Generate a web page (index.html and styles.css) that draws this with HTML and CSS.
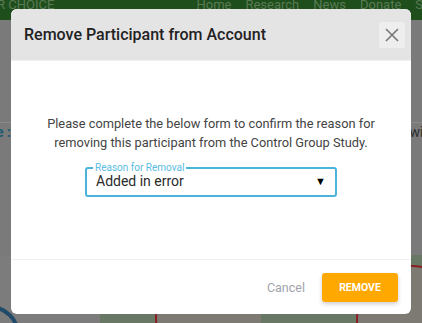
FILE: index.html
```html
<!DOCTYPE html>
<html lang="en">
<head>
  <meta charset="UTF-8" />
  <meta name="viewport" content="width=device-width, initial-scale=1.0"/>
  <title>Remove Participant</title>
  <link rel="stylesheet" href="styles.css">
</head>
<body>
  <div class="page">
    <header class="topnav">
      <span class="brand">R CHOICE</span>
      <nav class="links">
        <a>Home</a><a>Research</a><a>News</a><a>Donate</a><a>S</a>
      </nav>
    </header>
    <div class="content">
      <div class="row-line"></div>
      <div class="row-text">
        <span class="teal">e :</span>
        <span>wit</span>
      </div>
      <div class="cards">
        <div class="card card-grey"><span class="ring ring-blue"></span></div>
        <div class="card card-green"><span class="ring ring-red"></span></div>
        <div class="card card-green"><span class="ring ring-red small"></span></div>
      </div>
    </div>
  </div>

  <div class="overlay">
    <div class="modal">
      <div class="modal-header">
        <h2>Remove Participant from Account</h2>
        <button class="close" aria-label="Close">
          <svg width="14" height="14" viewBox="0 0 14 14">
            <path d="M1 1 L13 13 M13 1 L1 13" stroke="#777" stroke-width="1.6" fill="none"/>
          </svg>
        </button>
      </div>
      <div class="modal-body">
        <p>Please complete the below form to confirm the reason for removing this participant from the Control Group Study.</p>
        <fieldset class="field">
          <legend>Reason for Removal</legend>
          <div class="select">
            <span>Added in error</span>
            <span class="caret">&#9660;</span>
          </div>
        </fieldset>
      </div>
      <div class="modal-footer">
        <button class="btn-cancel">Cancel</button>
        <button class="btn-remove">REMOVE</button>
      </div>
    </div>
  </div>
</body>
</html>
```

FILE: styles.css
```css
:root {
  --accent: #4cb4da;
  --orange: #ffa800;
  --text: #444;
}
* {
  box-sizing: border-box;
}
body {
  font-family: Roboto, 'Liberation Sans', sans-serif;
  background-color: #7a7a7a;
  margin: 0;
  padding: 0;
  height: 323px;
  overflow: hidden;
}
.topnav {
  height: 20px;
  background-color: #1d4e1b;
  display: flex;
  justify-content: space-between;
  align-items: flex-start;
  overflow: hidden;
  color: #5b7a56;
  font-size: 13px;
  line-height: 10px;
  white-space: nowrap;
}
.brand {
  margin-left: -3px;
}
.links {
  display: flex;
  gap: 14px;
  margin-right: -1px;
}
.content {
  padding-top: 102px;
}
.row-line {
  height: 1px;
  background-color: #8a8a8a;
}
.row-text {
  display: flex;
  justify-content: space-between;
  padding: 1px 0 0;
  font-size: 14px;
  color: #2d2d2d;
  margin-left: -4px;
  margin-right: -6px;
}
.teal {
  color: #1d5a70;
  font-weight: 700;
}
.cards {
  margin-top: 115px;
  display: flex;
  height: 80px;
}
.card {
  position: relative;
  overflow: hidden;
}
.card-grey {
  width: 100px;
  background-color: #7c7c7c;
}
.card-green {
  flex: 1;
  background-color: #697865;
}
.ring {
  position: absolute;
  border-radius: 50%;
  border: 2px solid #8a1e22;
}
.ring-blue {
  border: 4px solid #1f4a6a;
  width: 60px;
  height: 60px;
  left: -40px;
  top: 50px;
}
.ring-red {
  width: 110px;
  height: 110px;
  left: 55px;
  top: 8px;
  background-color: #7d7a74;
}
.ring-red.small {
  left: 95px;
  top: 10px;
}

.overlay {
  position: fixed;
  inset: 0;
}
.modal {
  width: 400px;
  margin: 9px auto 0;
  background-color: #fff;
  border-radius: 6px;
  overflow: hidden;
}
.modal-header {
  height: 52px;
  background-color: #e5e4e5;
  display: flex;
  align-items: center;
  justify-content: space-between;
  padding: 0 6px 0 13px;
  border-bottom: 1px solid #efefef;
}
.modal-header h2 {
  margin: 0;
  font-size: 16px;
  font-weight: 500;
  color: #222;
}
.close {
  width: 26px;
  height: 26px;
  border: none;
  border-radius: 2px;
  background-color: #efeeee;
  display: flex;
  align-items: center;
  justify-content: center;
  padding: 0;
  cursor: pointer;
}
.modal-body {
  height: 198px;
  padding-top: 53px;
  text-align: center;
}
.modal-body p {
  margin: 0 auto;
  width: 340px;
  font-size: 12.8px;
  line-height: 19px;
  color: var(--text);
}
.field {
  width: 252px;
  margin: 11px auto 0;
  padding: 0 10px 0 9px;
  border: 2px solid var(--accent);
  border-radius: 3px;
  text-align: left;
}
.field legend {
  font-size: 10px;
  color: #5bbbe0;
  padding: 0 2px;
  margin-left: -3px;
  line-height: 10px;
}
.select {
  display: flex;
  justify-content: space-between;
  align-items: center;
  height: 22px;
  padding-bottom: 6px;
  font-size: 14px;
  color: #2a2a2a;
}
.caret {
  font-size: 11px;
  color: #000;
  margin-right: -1px;
}
.modal-footer {
  height: 55px;
  border-top: 1px solid #efefef;
  display: flex;
  justify-content: flex-end;
  align-items: center;
  gap: 17px;
  padding: 1px 13px 0 0;
}
.btn-cancel {
  background: none;
  border: none;
  font-family: inherit;
  font-size: 12.5px;
  color: #9fa3ab;
  padding: 0;
  cursor: pointer;
}
.btn-remove {
  width: 76px;
  height: 29px;
  background-color: var(--orange);
  color: #fff;
  border: none;
  border-radius: 3px;
  font-family: inherit;
  font-weight: 700;
  font-size: 10.5px;
  box-shadow: 0 2px 4px rgba(0,0,0,0.2);
  cursor: pointer;
}
```
